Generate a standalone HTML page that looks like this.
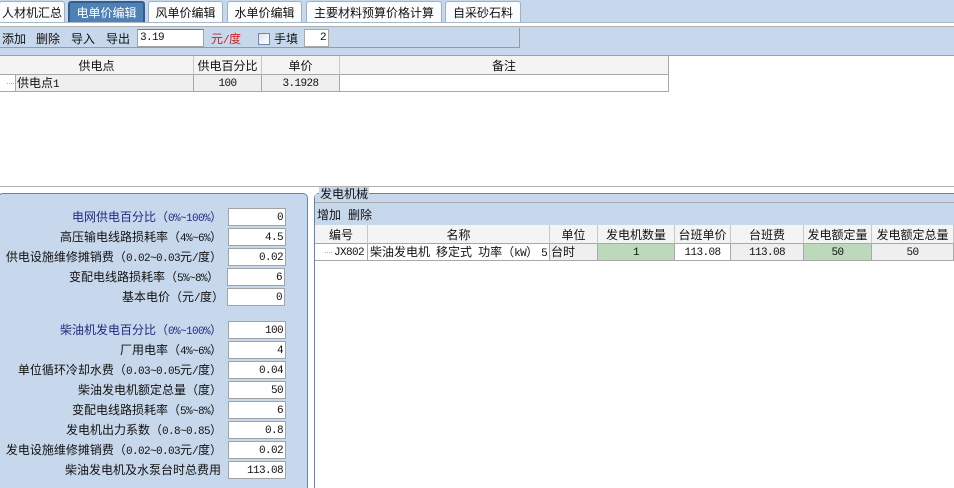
<!DOCTYPE html>
<html><head><meta charset="utf-8">
<style>
html,body{margin:0;padding:0;background:#fff;}
#p{position:relative;width:954px;height:488px;overflow:hidden;background:#fff;font:12px/14px "WenQuanYi Zen Hei","Noto Sans CJK SC","Liberation Sans",sans-serif;color:#111;}
#p div{position:absolute;box-sizing:border-box;white-space:pre;}
.m{font-family:"Liberation Mono",monospace;font-size:11px;letter-spacing:-0.6px;}
.tab{top:1px;height:21px;background:#fbfcfd;border:1px solid #9fb0c4;border-bottom:0;border-radius:3px 3px 0 0;text-align:center;line-height:21px;}
.tool{top:31px;line-height:16px;}
.h{background:#f4f4f4;border-right:1px solid #c8c8c8;border-bottom:1px solid #a8a8a8;text-align:center;line-height:19px;height:19px;}
.c{background:#efefef;border-right:1px solid #a8a8a8;border-bottom:1px solid #a8a8a8;text-align:center;line-height:16px;height:17px;overflow:hidden;}
.c.m{line-height:18px;}
.in{width:58px;height:18px;background:#fff;border:1px solid #a0a4a8;text-align:right;padding-right:2px;line-height:18px;font-family:"Liberation Mono",monospace;font-size:11px;letter-spacing:-0.6px;}
.lb{text-align:right;height:16px;line-height:16px;}
.dot{height:1px;width:8px;background:repeating-linear-gradient(90deg,#b0b0b0 0 1px,transparent 1px 2px);}
</style></head><body><div id="p">
<div style="left:0;top:0;width:954px;height:23px;background:#c8d8ec;border-bottom:1px solid #a9b9cc"></div>
<div style="left:0;top:23px;width:954px;height:4px;background:#fff;border-bottom:1px solid #b0b0b0"></div>
<div style="left:0;top:27px;width:954px;height:29px;background:#c8d8ec;border-bottom:1px solid #a0a0a0"></div>
<div style="left:0;top:28px;width:520px;height:20px;border-right:1px solid #9a9a9a;border-bottom:1px solid #9a9a9a"></div>

<div class="tab" style="left:-1px;width:66px;">人材机汇总</div>
<div class="tab" style="left:68px;width:77px;background:#4f81b4;color:#fff;border-color:#2f5f90;border-width:2px 2px 0 2px;line-height:19px;">电单价编辑</div>
<div class="tab" style="left:148px;width:75px;">风单价编辑</div>
<div class="tab" style="left:227px;width:75px;">水单价编辑</div>
<div class="tab" style="left:306px;width:136px;">主要材料预算价格计算</div>
<div class="tab" style="left:445px;width:76px;">自采砂石料</div>

<div class="tool" style="left:2px;">添加</div>
<div class="tool" style="left:36px;">删除</div>
<div class="tool" style="left:71px;">导入</div>
<div class="tool" style="left:106px;">导出</div>
<div class="m" style="left:137px;top:29px;width:67px;height:18px;background:#fff;border:1px solid #a0a4a8;border-top-color:#777;line-height:16px;padding-left:2px;">3.19</div>
<div class="tool" style="left:211px;color:#d02020;">元<span class="m">/</span>度</div>
<div style="left:258px;top:33px;width:12px;height:12px;background:linear-gradient(135deg,#dfe4ea,#fff);border:1px solid #6f87a8"></div>
<div class="tool" style="left:274px;">手填</div>
<div class="m" style="left:304px;top:29px;width:25px;height:18px;background:#fff;border:1px solid #a8a8a8;text-align:right;padding-right:2px;line-height:17px;">2</div>

<div class="h" style="left:0;top:56px;width:194px;">供电点</div>
<div class="h" style="left:194px;top:56px;width:68px;">供电百分比</div>
<div class="h" style="left:262px;top:56px;width:78px;">单价</div>
<div class="h" style="left:340px;top:56px;width:329px;border-right-color:#a8a8a8">备注</div>
<div class="c" style="left:0;top:75px;width:16px;background:#fff;"></div>
<div class="dot" style="left:7px;top:83px;"></div>
<div class="c" style="left:16px;top:75px;width:178px;text-align:left;padding-left:1px;">供电点<span class="m">1</span></div>
<div class="c m" style="left:194px;top:75px;width:68px;">100</div>
<div class="c m" style="left:262px;top:75px;width:78px;">3.1928</div>
<div class="c" style="left:340px;top:75px;width:329px;background:#fff;"></div>

<div style="left:0;top:186px;width:954px;height:1px;background:#b0b0b0"></div>
<div style="left:-2px;top:193px;width:310px;height:300px;background:#c8d8ec;border:1px solid #5f86b0;border-radius:5px;"></div>

<div class="lb" style="left:0;width:222px;top:209px;color:#1c2c80">电网供电百分比（<span class="m">0%~100%</span>）</div>
<div class="in" style="left:228px;top:208px;">0</div>
<div class="lb" style="left:0;width:222px;top:229px;">高压输电线路损耗率（<span class="m">4%~6%</span>）</div>
<div class="in" style="left:228px;top:228px;">4.5</div>
<div class="lb" style="left:0;width:222px;top:249px;">供电设施维修摊销费（<span class="m">0.02~0.03</span>元<span class="m">/</span>度）</div>
<div class="in" style="left:228px;top:248px;">0.02</div>
<div class="lb" style="left:0;width:219px;top:269px;">变配电线路损耗率（<span class="m">5%~8%</span>）</div>
<div class="in" style="left:227px;top:268px;">6</div>
<div class="lb" style="left:0;width:224px;top:289px;">基本电价（元<span class="m">/</span>度）</div>
<div class="in" style="left:227px;top:288px;">0</div>

<div class="lb" style="left:0;width:222px;top:322px;color:#1c2c80">柴油机发电百分比（<span class="m">0%~100%</span>）</div>
<div class="in" style="left:228px;top:321px;">100</div>
<div class="lb" style="left:0;width:222px;top:342px;">厂用电率（<span class="m">4%~6%</span>）</div>
<div class="in" style="left:228px;top:341px;">4</div>
<div class="lb" style="left:0;width:222px;top:362px;">单位循环冷却水费（<span class="m">0.03~0.05</span>元<span class="m">/</span>度）</div>
<div class="in" style="left:228px;top:361px;">0.04</div>
<div class="lb" style="left:0;width:222px;top:382px;">柴油发电机额定总量（度）</div>
<div class="in" style="left:228px;top:381px;">50</div>
<div class="lb" style="left:0;width:222px;top:402px;">变配电线路损耗率（<span class="m">5%~8%</span>）</div>
<div class="in" style="left:228px;top:401px;">6</div>
<div class="lb" style="left:0;width:222px;top:422px;">发电机出力系数（<span class="m">0.8~0.85</span>）</div>
<div class="in" style="left:228px;top:421px;">0.8</div>
<div class="lb" style="left:0;width:222px;top:442px;">发电设施维修摊销费（<span class="m">0.02~0.03</span>元<span class="m">/</span>度）</div>
<div class="in" style="left:228px;top:441px;">0.02</div>
<div class="lb" style="left:0;width:221px;top:462px;">柴油发电机及水泵台时总费用</div>
<div class="in" style="left:228px;top:461px;">113.08</div>

<div style="left:314px;top:193px;width:650px;height:300px;background:#fff;border:1px solid #5f86b0;border-radius:5px 0 0 0;"></div>
<div style="left:315px;top:194px;width:640px;height:9px;background:#c8d8ec;"></div>
<div style="left:319px;top:187px;height:14px;line-height:14px;background:#c8d8ec;padding:0 1px;">发电机械</div>
<div style="left:315px;top:202px;width:640px;height:23px;background:#c8d8ec;border-top:1px solid #a8a8a8;"></div>
<div style="left:317px;top:208px;">增加</div>
<div style="left:348px;top:208px;">删除</div>

<div class="h" style="left:315px;top:225px;width:53px;">编号</div>
<div class="h" style="left:368px;top:225px;width:182px;">名称</div>
<div class="h" style="left:550px;top:225px;width:48px;">单位</div>
<div class="h" style="left:598px;top:225px;width:77px;">发电机数量</div>
<div class="h" style="left:675px;top:225px;width:56px;">台班单价</div>
<div class="h" style="left:731px;top:225px;width:73px;">台班费</div>
<div class="h" style="left:804px;top:225px;width:68px;">发电额定量</div>
<div class="h" style="left:872px;top:225px;width:82px;">发电额定总量</div>

<div class="c" style="left:315px;top:244px;width:18px;background:#fff;border-right:0;"></div>
<div class="dot" style="left:325px;top:252px;"></div>
<div class="c m" style="left:333px;top:244px;width:35px;background:#fff;text-align:left;padding-left:1px;">JX802</div>
<div class="c" style="left:368px;top:244px;width:182px;background:#fff;text-align:left;padding-left:2px;">柴油发电机<span class="m"> </span>移定式<span class="m"> </span>功率（<span class="m">kW</span>）<span class="m" style="margin-left:-3px"> 5</span></div>
<div class="c" style="left:550px;top:244px;width:48px;text-align:left;padding-left:1px;">台时</div>
<div class="c m" style="left:598px;top:244px;width:77px;background:#bcd9bc;">1</div>
<div class="c m" style="left:675px;top:244px;width:56px;background:#fff;">113.08</div>
<div class="c m" style="left:731px;top:244px;width:73px;">113.08</div>
<div class="c m" style="left:804px;top:244px;width:68px;background:#bcd9bc;">50</div>
<div class="c m" style="left:872px;top:244px;width:82px;">50</div>
</div></body></html>
